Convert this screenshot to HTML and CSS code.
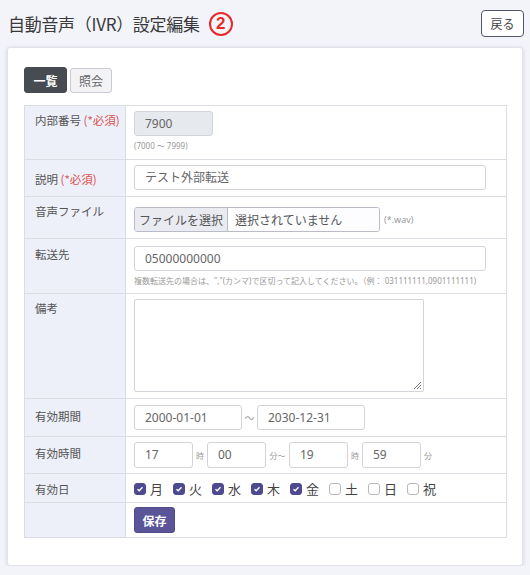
FILE: index.html
```html
<!DOCTYPE html>
<html lang="ja">
<head>
<meta charset="utf-8">
<title>自動音声（IVR）設定編集</title>
<link rel="stylesheet" href="styles.css">
</head>
<body>
<header class="header">
  <h1 class="title">自動音声（IVR）設定編集<span class="num">2</span></h1>
  <button class="back">戻る</button>
</header>
<main class="card">
  <div class="tabs">
    <button class="tab active">一覧</button>
    <button class="tab">照会</button>
  </div>
  <table class="form">
    <tr class="r1">
      <th>内部番号 <span class="req">(*必須)</span></th>
      <td>
        <div class="input disabled w-ext">7900</div>
        <div class="hint">(7000 ～ 7999)</div>
      </td>
    </tr>
    <tr class="r2">
      <th>説明 <span class="req">(*必須)</span></th>
      <td><div class="input w-full">テスト外部転送</div></td>
    </tr>
    <tr class="r3">
      <th>音声ファイル</th>
      <td>
        <div class="inline">
          <div class="file"><span class="file-btn">ファイルを選択</span><span class="file-name">選択されていません</span></div>
          <span class="small">(*.wav)</span>
        </div>
      </td>
    </tr>
    <tr class="r4">
      <th>転送先</th>
      <td>
        <div class="input w-full">05000000000</div>
        <div class="hint">複数転送先の場合は、","(カンマ)で区切って記入してください。（例： 031111111,0901111111)</div>
      </td>
    </tr>
    <tr class="r5">
      <th>備考</th>
      <td><div class="textarea"><svg class="grip" width="9" height="9" viewBox="0 0 9 9"><path d="M8 1L1 8M8 4L4 8M8 7L7 8" stroke="#777" stroke-width="1"/></svg></div></td>
    </tr>
    <tr class="r6">
      <th>有効期間</th>
      <td>
        <div class="inline">
          <div class="input w-date">2000-01-01</div>
          <span class="tilde">～</span>
          <div class="input w-date">2030-12-31</div>
        </div>
      </td>
    </tr>
    <tr class="r7">
      <th>有効時間</th>
      <td>
        <div class="inline">
          <div class="input w-time">17</div><span class="unit">時</span>
          <div class="input w-time">00</div><span class="unit unit-wide">分～</span>
          <div class="input w-time">19</div><span class="unit">時</span>
          <div class="input w-time">59</div><span class="unit">分</span>
        </div>
      </td>
    </tr>
    <tr class="r8">
      <th>有効日</th>
      <td>
        <div class="days">
          <label class="day"><span class="cb on"><svg width="8" height="8" viewBox="0 0 8 8"><path d="M1.5 4.2L3.2 5.8L6.5 2.3" fill="none" stroke="#fff" stroke-width="1.3"/></svg></span>月</label>
          <label class="day"><span class="cb on"><svg width="8" height="8" viewBox="0 0 8 8"><path d="M1.5 4.2L3.2 5.8L6.5 2.3" fill="none" stroke="#fff" stroke-width="1.3"/></svg></span>火</label>
          <label class="day"><span class="cb on"><svg width="8" height="8" viewBox="0 0 8 8"><path d="M1.5 4.2L3.2 5.8L6.5 2.3" fill="none" stroke="#fff" stroke-width="1.3"/></svg></span>水</label>
          <label class="day"><span class="cb on"><svg width="8" height="8" viewBox="0 0 8 8"><path d="M1.5 4.2L3.2 5.8L6.5 2.3" fill="none" stroke="#fff" stroke-width="1.3"/></svg></span>木</label>
          <label class="day"><span class="cb on"><svg width="8" height="8" viewBox="0 0 8 8"><path d="M1.5 4.2L3.2 5.8L6.5 2.3" fill="none" stroke="#fff" stroke-width="1.3"/></svg></span>金</label>
          <label class="day"><span class="cb"></span>土</label>
          <label class="day"><span class="cb"></span>日</label>
          <label class="day"><span class="cb"></span>祝</label>
        </div>
      </td>
    </tr>
    <tr class="r9">
      <th></th>
      <td><button class="save">保存</button></td>
    </tr>
  </table>
</main>
</body>
</html>
```
FILE: styles.css
```css
* { box-sizing: border-box; }
body {
  margin: 0;
  background: #f3f4fa;
  font-family: "Noto Sans", "Noto Sans CJK JP", sans-serif;
  color: #444;
}
.header {
  display: flex;
  justify-content: space-between;
  align-items: center;
  height: 37px;
  padding: 10px 6px 0 8px;
}
.title {
  margin: 0;
  font-size: 17px;
  font-weight: normal;
  color: #3a3a3a;
  display: flex;
  align-items: center;
  font-family: "Noto Sans CJK JP", sans-serif;
  letter-spacing: -0.3px;
}
.num {
  display: inline-flex;
  align-items: center;
  justify-content: center;
  width: 24px;
  height: 24px;
  margin-left: 9px;
  border: 2px solid #e52a2a;
  border-radius: 50%;
  color: #e52a2a;
  font-size: 17px;
  font-weight: bold;
  font-family: "Liberation Sans", sans-serif;
  line-height: 1;
}
.back {
  width: 43px;
  height: 27px;
  padding: 0;
  background: #fff;
  border: 1px solid #55556a;
  border-radius: 4px;
  font-family: "Noto Sans CJK JP", sans-serif;
  font-size: 12px;
  color: #444;
}
.card {
  margin: 10px 7px 0 7px;
  background: #fff;
  border: 1px solid #e1e2ea;
  border-radius: 3px;
  box-shadow: 0 1px 4px rgba(0, 0, 0, 0.14);
  padding: 19px 15px 27px 16px;
}
.tabs {
  display: flex;
  gap: 3px;
  align-items: center;
  margin-bottom: 12px;
}
.tab {
  height: 25px;
  width: 42px;
  padding: 0;
  font-family: "Noto Sans CJK JP", sans-serif;
  font-size: 12px;
  border-radius: 3px;
  border: 1px solid #c9cad3;
  background: #f3f3f6;
  color: #666;
}
.tab.active {
  height: 26px;
  width: 43px;
  background: #474c53;
  border-color: #474c53;
  color: #fff;
  font-weight: bold;
}
.form {
  width: 100%;
  border-collapse: collapse;
  font-size: 12px;
}
.form th, .form td {
  border: 1px solid #dcdde3;
  vertical-align: top;
}
.form th {
  width: 101px;
  background: #eef0f9;
  text-align: left;
  font-weight: normal;
  color: #555;
  padding: 6px 0 0 10px;
  font-family: "Noto Sans CJK JP", sans-serif;
  font-size: 11.5px;
  line-height: 16px;
  white-space: nowrap;
}
.form td {
  padding: 5px 8px 6px 8px;
}
.req { color: #d9534f; }
.input {
  height: 25px;
  border: 1px solid #d2d4da;
  border-radius: 3px;
  padding: 0 10px;
  font-size: 12px;
  line-height: 23px;
  color: #666;
  background: #fff;
  font-family: "Noto Sans", "Noto Sans CJK JP", sans-serif;
}
.input.disabled { background: #e6e9ee; color: #666; }
.w-ext { width: 79px; }
.w-full { width: 352px; }
.w-date { width: 108px; }
.w-time { width: 59px; }
.hint {
  font-size: 8px;
  color: #999;
  margin-top: 3px;
  line-height: 14px;
  white-space: nowrap;
}
.r1 td { padding-bottom: 6px; }
.r2 th { padding-top: 11px; }
.r3 th { padding-top: 6px; }
.r3 td { padding-top: 10px; padding-bottom: 6px; }
.r4 th { padding-top: 7px; }
.r4 td { padding-top: 7px; padding-bottom: 5px; }
.r5 td { padding-bottom: 6px; }
.r6 th { padding-top: 9px; }
.r6 td { padding-top: 6px; padding-bottom: 6px; }
.r7 th { padding-top: 8px; }
.r7 td { padding-top: 5px; padding-bottom: 5px; }
.r7 .input { height: 26px; line-height: 24px; }
.r8 th { padding-top: 7px; }
.r8 td { padding-top: 6px; padding-bottom: 5px; }
.r9 td { padding-top: 4px; padding-bottom: 4px; }
.inline {
  display: flex;
  align-items: center;
}
.file {
  display: flex;
  width: 246px;
  height: 25px;
  border: 1px solid #b9bcc8;
  border-radius: 3px;
  overflow: hidden;
  font-family: "Noto Sans CJK JP", sans-serif;
  font-size: 12px;
  color: #555;
}
.file-btn {
  width: 93px;
  background: #e9ebf1;
  border-right: 1px solid #b9bcc8;
  text-align: center;
  line-height: 23px;
}
.file-name {
  padding-left: 7px;
  line-height: 23px;
  background: #fdfdff;
  flex: 1;
}
.small {
  font-size: 9px;
  color: #999;
  margin-left: 4px;
}
.textarea {
  position: relative;
  width: 290px;
  height: 93px;
  border: 1px solid #d2d4da;
  border-radius: 2px;
}
.grip {
  position: absolute;
  right: 1px;
  bottom: 1px;
}
.tilde {
  font-size: 10px;
  color: #999;
  width: 15px;
  text-align: center;
}
.unit {
  font-size: 8px;
  color: #999;
  width: 14px;
  text-align: center;
}
.unit-wide { width: 23px; }
.days {
  display: flex;
  align-items: center;
  height: 17px;
}
.day {
  display: flex;
  align-items: center;
  width: 39px;
  font-family: "Noto Sans CJK JP", sans-serif;
  font-size: 13px;
  color: #444;
}
.cb {
  width: 12px;
  height: 12px;
  border: 1px solid #b8b8c0;
  border-radius: 3px;
  margin-right: 4px;
  display: inline-flex;
  align-items: center;
  justify-content: center;
  background: #fff;
}
.cb.on {
  background: #4e4a8f;
  border-color: #4e4a8f;
}
.save {
  width: 41px;
  height: 26px;
  padding: 0;
  border: 1px solid #4f4a8c;
  border-radius: 3px;
  background: #5a5499;
  color: #fff;
  font-family: "Noto Sans CJK JP", sans-serif;
  font-size: 12px;
  font-weight: bold;
}
```
